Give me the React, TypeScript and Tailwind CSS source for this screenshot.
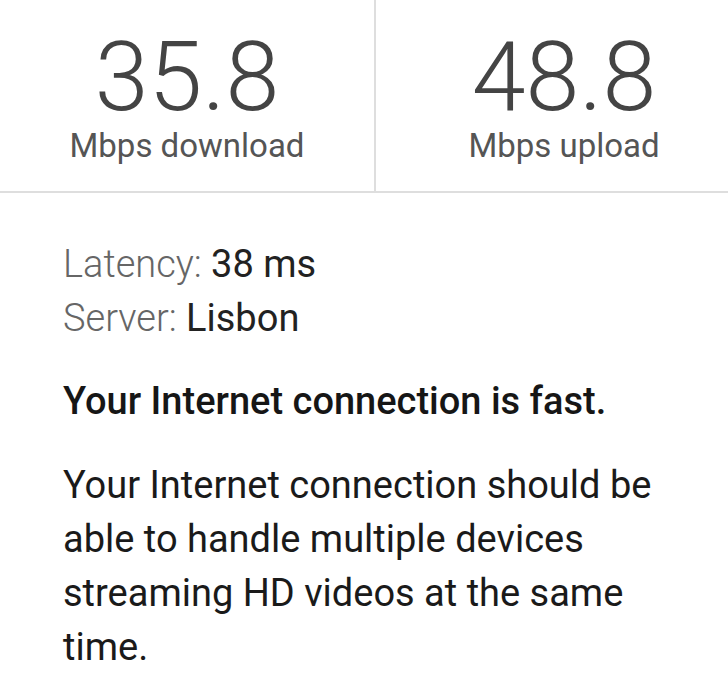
export default function App() {
  const stats = [
    { value: "35.8", label: "Mbps download" },
    { value: "48.8", label: "Mbps upload" },
  ];

  return (
    <div className="min-h-[700px] w-[728px] overflow-hidden bg-white font-['Roboto',sans-serif]">
      {/* Speed results */}
      <div className="grid h-[193px] w-[752px] grid-cols-[376px_376px] border-b-2 border-[#dedede]">
        {stats.map((s, i) => (
          <div
            key={s.label}
            className={
              "flex flex-col items-center pt-[29px] " +
              (i === 0 ? "border-r-2 border-[#dedede]" : "")
            }
          >
            <div className="text-[97px] leading-none font-light text-[#444]">{s.value}</div>
            <div className="text-[33px] leading-[40px] text-[#555]">{s.label}</div>
          </div>
        ))}
      </div>

      {/* Details */}
      <div className="px-[63px] pt-[44px] text-[38px] leading-[54px]">
        <div>
          <span className="font-light text-[#666]">Latency: </span>
          <span className="text-[#222]">38 ms</span>
        </div>
        <div>
          <span className="font-light text-[#666]">Server: </span>
          <span className="text-[#222]">Lisbon</span>
        </div>
        <p className="mt-[29px] font-medium text-[#161616]">Your Internet connection is fast.</p>
        <p className="mt-[30px] text-[#1a1a1a]">
          Your Internet connection should be able to handle multiple devices streaming HD videos at the
          same time.
        </p>
      </div>
    </div>
  );
}
